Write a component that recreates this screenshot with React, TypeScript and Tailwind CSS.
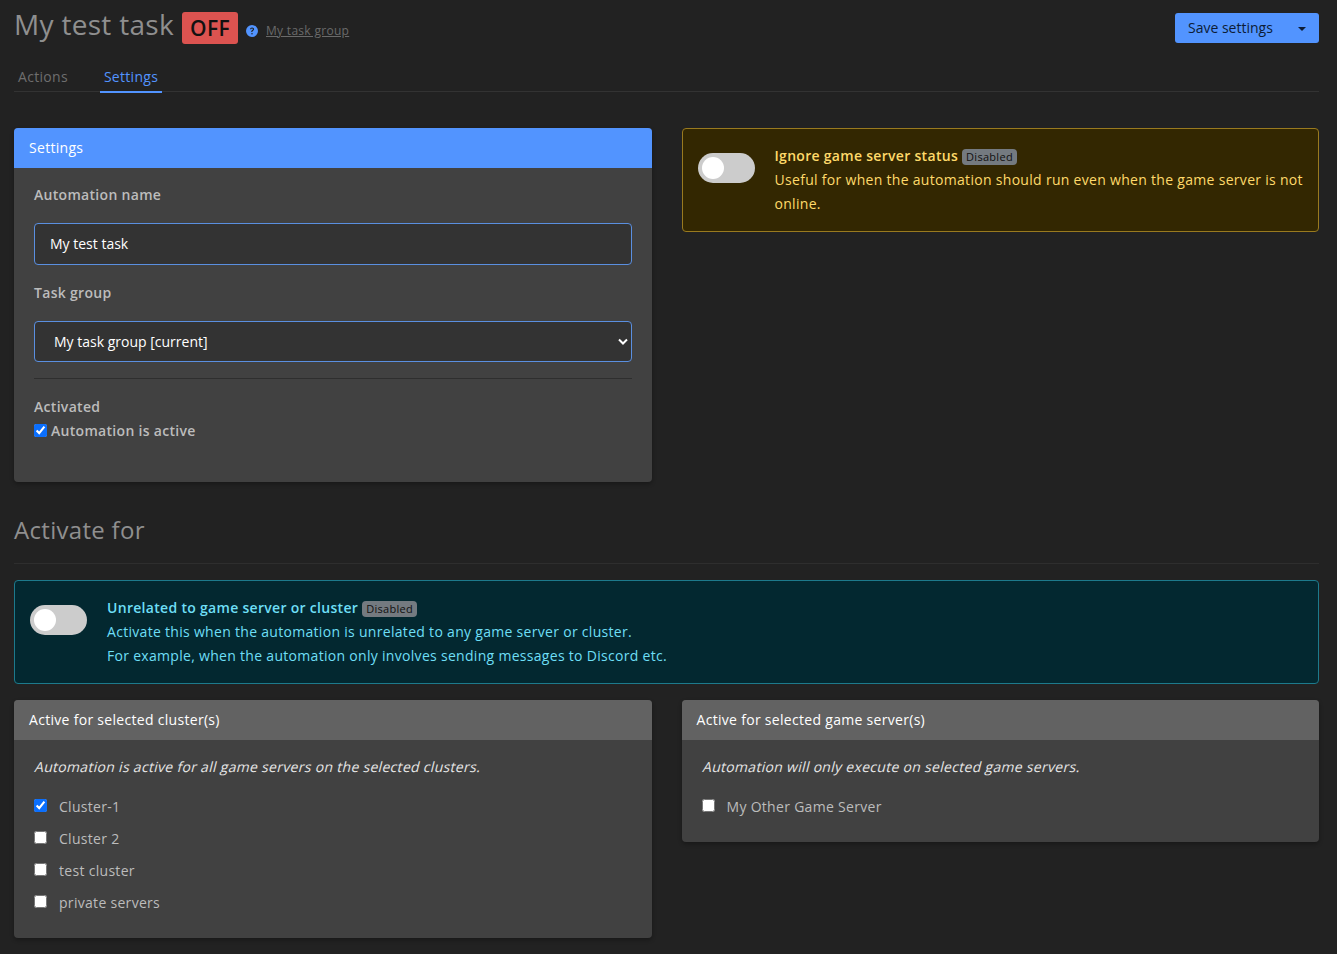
import React from "react";

const font = { fontFamily: '"Open Sans", "Noto Sans", sans-serif' };

function Toggle() {
  return (
    <div className="mt-[9px] flex h-[30px] w-[57px] shrink-0 items-center rounded-full bg-[#cccccc] pl-[4px]">
      <div className="h-[22px] w-[22px] rounded-full bg-white" />
    </div>
  );
}

function Badge() {
  return (
    <span className="ml-[4px] inline-block h-[16px] rounded-[4px] bg-[#747a80] px-[4px] align-[0px] text-[11px] font-medium leading-[16px] text-[#111111]">
      Disabled
    </span>
  );
}

function Check({ label, checked }: { label: string; checked?: boolean }) {
  return (
    <label className="flex h-[32px] items-center">
      <input
        type="checkbox"
        defaultChecked={checked}
        className="m-0 mb-[3px] h-[13px] w-[13px] accent-[#0b6ffd]"
      />
      <span className="ml-[12px] text-[#bcbcbc]">{label}</span>
    </label>
  );
}

function Panel({
  title,
  children,
  blue,
}: {
  title: string;
  children: React.ReactNode;
  blue?: boolean;
}) {
  return (
    <div className="overflow-hidden rounded-[4px] bg-[#414141] shadow-[0_2px_4px_rgba(0,0,0,0.3)]">
      <div
        className={`flex h-[40px] items-center px-[15px] text-white ${
          blue ? "bg-[#5294ff]" : "bg-[#626262]"
        }`}
      >
        {title}
      </div>
      {children}
    </div>
  );
}

export default function App() {
  return (
    <div
      style={font}
      className="min-h-[954px] bg-[#222222] pl-[14px] pr-[18px] pt-[12px] pb-[16px] text-[14px] leading-[24px] tracking-[0.3px]"
    >
      <div className="flex h-[32px] items-center justify-between">
        <div className="flex items-center">
          <span className="-mt-[9px] text-[28px] leading-[28px] text-[#8f8f8f]">My test task</span>
          <span className="ml-[8px] flex h-[32px] w-[56px] items-center justify-center rounded-[3px] bg-[#dc5350] text-[21px] font-semibold text-[#111111]">
            OFF
          </span>
          <svg viewBox="0 0 16 16" className="ml-[8px] mt-[6px] h-[12px] w-[12px]" fill="#5294ff">
            <path d="M8 0a8 8 0 1 0 0 16A8 8 0 0 0 8 0ZM5.3 5.8C5.4 4.2 6.5 3.2 8.1 3.2c1.6 0 2.7 1 2.7 2.3 0 .9-.4 1.5-1.300 2.100-.8.500-1 .8-1 1.400v.3H7v-.4c0-1 .4-1.600 1.200-2.100.7-.5 1-.8 1-1.300 0-.6-.5-1-1.100-1-.7 0-1.200.4-1.300 1.200H5.300ZM8 12.800a1 1 0 1 1 0-2 1 1 0 0 1 0 2Z" />
          </svg>
          <span className="ml-[8px] mt-[6px] text-[12px] text-[#6a6a6a] underline">My task group</span>
        </div>
        <div className="flex h-[30px] w-[144px] items-center justify-between rounded-[3px] bg-[#5294ff] pl-[13px] pr-[13px] tracking-normal text-[#0c1c36]">
          Save settings
          <span className="mt-[1px] h-0 w-0 border-x-[4px] border-t-[4px] border-x-transparent border-t-[#0c1c36]" />
        </div>
      </div>

      <div className="mt-[13px] flex h-[35px] gap-[36px] border-b border-[#333333] pl-[4px] pt-[8px]">
        <span className="text-[#6e6e6e]">Actions</span>
        <span className="-ml-[4px] h-[28px] border-b-2 border-[#5294ff] px-[4px] text-[#5294ff]">Settings</span>
      </div>

      <div className="mt-[36px] grid grid-cols-2 items-start gap-[30px]">
        <Panel title="Settings" blue>
          <div className="h-[314px] px-[20px] pt-[15px]">
            <div className="font-semibold text-[#bcbcbc]">Automation name</div>
            <input
              readOnly
              value="My test task"
              className="mt-[16px] block h-[42px] w-full rounded-[4px] border border-[#5a8fe0] bg-[#333333] px-[15px] pb-[2px] tracking-normal text-white outline-none"
            />
            <div className="mt-[16px] font-semibold text-[#bcbcbc]">Task group</div>
            <div className="relative mt-[16px]">
              <select className="block h-[41px] w-full appearance-none rounded-[4px] border border-[#5a8fe0] bg-[#333333] px-[19px] tracking-normal text-white outline-none">
                <option>My task group [current]</option>
              </select>
              <svg
                viewBox="0 0 10 7"
                className="pointer-events-none absolute right-[4px] top-[17px] h-[7px] w-[10px]"
                fill="none"
                stroke="white"
                strokeWidth="2"
              >
                <path d="M1 1.500 5 5.500 9 1.500" />
              </svg>
            </div>
            <div className="mt-[16px] border-t border-[#2e2e2e]" />
            <div className="mt-[16px] font-semibold text-[#bcbcbc]">Activated</div>
            <label className="flex items-center">
              <input
                type="checkbox"
                defaultChecked
                className="m-0 mb-[2px] h-[13px] w-[13px] accent-[#0b6ffd]"
              />
              <span className="ml-[4px] font-semibold text-[#bcbcbc]">Automation is active</span>
            </label>
          </div>
        </Panel>

        <div className="flex gap-[20px] rounded-[4px] border border-[#997a1f] bg-[#332701] px-[15px] py-[15px] text-[#ffda6a]">
          <Toggle />
          <div>
            <div>
              <span className="font-semibold">Ignore game server status</span>
              <Badge />
            </div>
            <div>Useful for when the automation should run even when the game server is not online.</div>
          </div>
        </div>
      </div>

      <div className="mt-[29px] h-[53px] border-b border-[#2e2e2e] text-[24px] leading-[38px] text-[#8f8f8f]">
        Activate for
      </div>

      <div className="mt-[16px] flex gap-[20px] rounded-[4px] border border-[#1d7a8c] bg-[#032830] px-[15px] py-[15px] text-[#6edff6]">
        <Toggle />
        <div>
          <div>
            <span className="font-semibold">Unrelated to game server or cluster</span>
            <Badge />
          </div>
          <div>Activate this when the automation is unrelated to any game server or cluster.</div>
          <div>For example, when the automation only involves sending messages to Discord etc.</div>
        </div>
      </div>

      <div className="mt-[16px] grid grid-cols-2 items-start gap-[30px]">
        <Panel title="Active for selected cluster(s)">
          <div className="px-[20px] pt-[15px] pb-[19px]">
            <div className="origin-[50%_17px] -skew-x-[14deg] text-[#e6e6e6]">Automation is active for all game servers on the selected clusters.</div>
            <div className="mt-[12px]">
              <Check label="Cluster-1" checked />
              <Check label="Cluster 2" />
              <Check label="test cluster" />
              <Check label="private servers" />
            </div>
          </div>
        </Panel>
        <Panel title="Active for selected game server(s)">
          <div className="px-[20px] pt-[15px] pb-[19px]">
            <div className="origin-[50%_17px] -skew-x-[14deg] text-[#e6e6e6]">Automation will only execute on selected game servers.</div>
            <div className="mt-[12px]">
              <Check label="My Other Game Server" />
            </div>
          </div>
        </Panel>
      </div>
    </div>
  );
}
